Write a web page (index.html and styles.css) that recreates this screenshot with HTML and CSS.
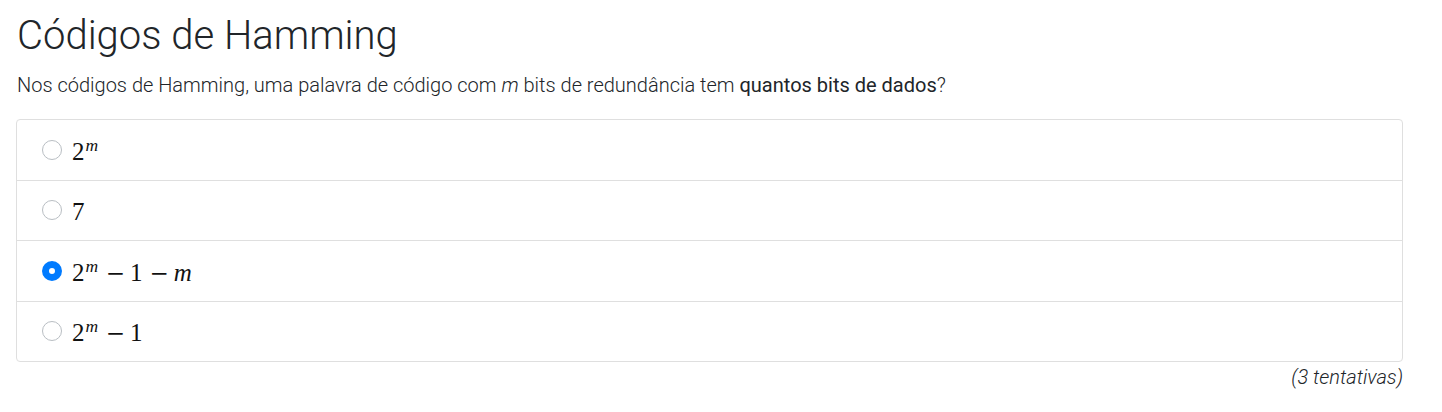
FILE: index.html
```html
<!DOCTYPE html>
<html lang="pt">
<head>
<meta charset="utf-8">
<title>Códigos de Hamming</title>
<link rel="stylesheet" href="styles.css">
</head>
<body>
<main class="page">
  <h1 class="title">Códigos de Hamming</h1>
  <p class="question">Nos códigos de Hamming, uma palavra de código com <em>m</em> bits de redundância tem <strong>quantos bits de dados</strong>?</p>
  <ul class="options">
    <li class="option">
      <span class="radio"></span>
      <span class="math"><span class="num">2</span><sup class="var">m</sup></span>
    </li>
    <li class="option">
      <span class="radio"></span>
      <span class="math"><span class="num">7</span></span>
    </li>
    <li class="option">
      <span class="radio checked"></span>
      <span class="math"><span class="num">2</span><sup class="var">m</sup><span class="op">−</span><span class="num">1</span><span class="op">−</span><span class="var">m</span></span>
    </li>
    <li class="option">
      <span class="radio"></span>
      <span class="math"><span class="num">2</span><sup class="var">m</sup><span class="op">−</span><span class="num">1</span></span>
    </li>
  </ul>
  <p class="attempts">(3 tentativas)</p>
</main>
</body>
</html>
```
FILE: styles.css
```css
* { box-sizing: border-box; }
html, body { margin: 0; padding: 0; background: #fff; }
body {
  font-family: Roboto, "Noto Sans", sans-serif;
  font-weight: 300;
  color: #212529;
}
.page {
  padding: 12px 39px 0 16px;
}
.title {
  margin: 0 0 0 1px;
  font-size: 40px;
  font-weight: 300;
  line-height: 48px;
}
.question {
  margin: 10px 0 19px 1px;
  font-size: 20px;
  line-height: 30px;
}
.question em { font-style: italic; }
.question strong { font-weight: 400; }
.options {
  list-style: none;
  margin: 0;
  padding: 0;
  border: 1px solid #dfdfdf;
  border-radius: 4px;
}
.option {
  display: flex;
  align-items: center;
  gap: 10px;
  height: 60.5px;
  padding: 0 25px;
  border-top: 1px solid #dfdfdf;
}
.option:first-child { border-top: none; height: 59.5px; }
.radio {
  width: 20px;
  height: 20px;
  border-radius: 50%;
  border: 1px solid #b9bec3;
  background: #fff;
  flex: none;
}
.radio.checked {
  border: 7px solid #007bff;
  background: #fff;
}
.math {
  font-family: "Liberation Serif", "DejaVu Serif", serif;
  font-weight: 400;
  font-size: 25px;
  color: #111;
  display: inline-flex;
  align-items: baseline;
  white-space: nowrap;
  position: relative;
  top: 2px;
}
.math .var { font-style: italic; letter-spacing: 0.5px; }
.math sup {
  font-size: 17.5px;
  position: relative;
  top: -9px;
  vertical-align: baseline;
  margin-left: 1px;
}
.math .op {
  font-family: "DejaVu Serif", serif;
  font-size: 23px;
  margin: 0 5px 0 7px;
}
.attempts {
  margin: 0;
  text-align: right;
  font-style: italic;
  font-size: 20px;
  line-height: 30px;
}
```
